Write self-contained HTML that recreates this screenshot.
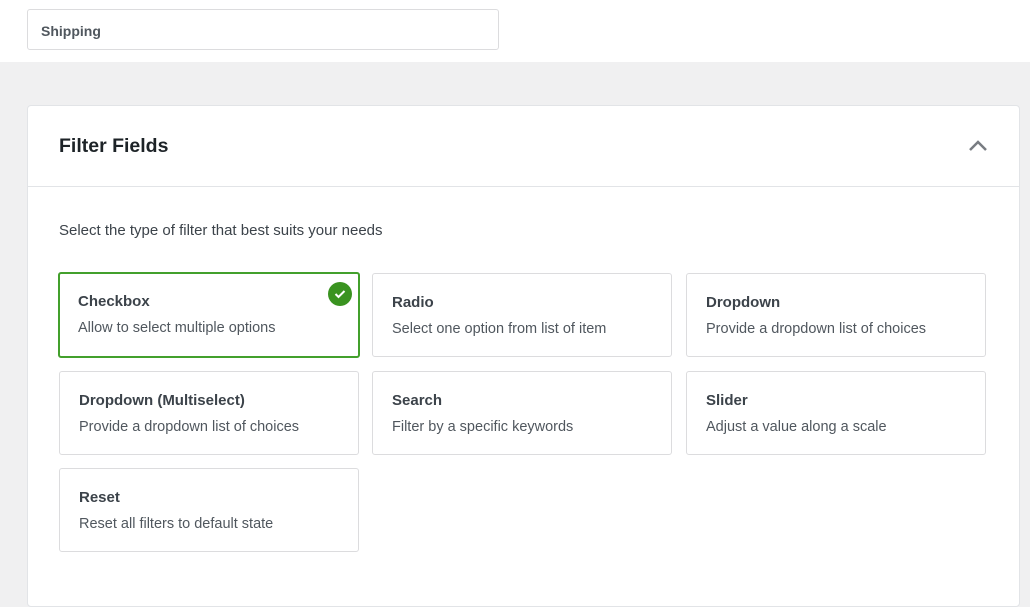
<!DOCTYPE html>
<html><head><style>
body{margin:0;width:1030px;height:575px;overflow:hidden;background:#f0f0f1;font-family:"Liberation Sans",sans-serif;position:relative}
.top{position:absolute;left:0;top:0;width:1030px;height:62px;background:#fff}
.inp{position:absolute;left:27px;top:9px;width:470px;height:39px;border:1px solid #dcdcde;border-radius:3px;box-sizing:content-box}
.inp span{position:absolute;left:13px;top:13px;font-size:14px;font-weight:bold;color:#50575e}
.panel{position:absolute;left:27px;top:105px;width:991px;height:500px;background:#fff;border:1px solid #e2e4e7;border-radius:4px}
.hd{height:80px;border-bottom:1px solid #e2e4e7;position:relative}
.hd h2{margin:0;position:absolute;left:31px;top:29px;font-size:19.5px;color:#1d2327}
.chev{position:absolute;left:939px;top:33px}
.desc{position:absolute;left:31px;top:116px;font-size:15px;color:#3c434a}
.card{position:absolute;width:298px;height:82px;border:1px solid #dcdcde;border-radius:3px;background:#fff}
.card b{position:absolute;left:19px;top:20px;font-size:15px;color:#3c434a}
.card i{position:absolute;left:19px;top:47px;font-size:14.5px;font-style:normal;color:#50575e}
.sel{border:2px solid #43a02c;width:298px;height:82px}
.sel b{left:18px;top:19px}.sel i{left:18px;top:46px}
.ck{position:absolute;right:6px;top:8px;width:24px;height:24px;border-radius:50%;background:#3a9320}
</style></head><body>
<div class="top"><div class="inp"><span>Shipping</span></div></div>
<div class="panel">
<div class="hd"><h2>Filter Fields</h2>
<svg class="chev" width="22" height="14" viewBox="0 0 22 14"><path d="M3 11 L11 3 L19 11" fill="none" stroke="#787c82" stroke-width="2.5"/></svg></div>
<div class="desc">Select the type of filter that best suits your needs</div>
</div>
<div class="card sel" style="left:58px;top:272px"><b>Checkbox</b><i>Allow to select multiple options</i>
<div class="ck"><svg width="24" height="24" viewBox="0 0 24 24"><path d="M7.5 12 L10.5 15 L16.5 9" fill="none" stroke="#fff" stroke-width="2"/></svg></div></div>
<div class="card" style="left:372px;top:273px"><b>Radio</b><i>Select one option from list of item</i></div>
<div class="card" style="left:686px;top:273px"><b>Dropdown</b><i>Provide a dropdown list of choices</i></div>
<div class="card" style="left:59px;top:371px"><b>Dropdown (Multiselect)</b><i>Provide a dropdown list of choices</i></div>
<div class="card" style="left:372px;top:371px"><b>Search</b><i>Filter by a specific keywords</i></div>
<div class="card" style="left:686px;top:371px"><b>Slider</b><i>Adjust a value along a scale</i></div>
<div class="card" style="left:59px;top:468px"><b>Reset</b><i>Reset all filters to default state</i></div>
</body></html>
